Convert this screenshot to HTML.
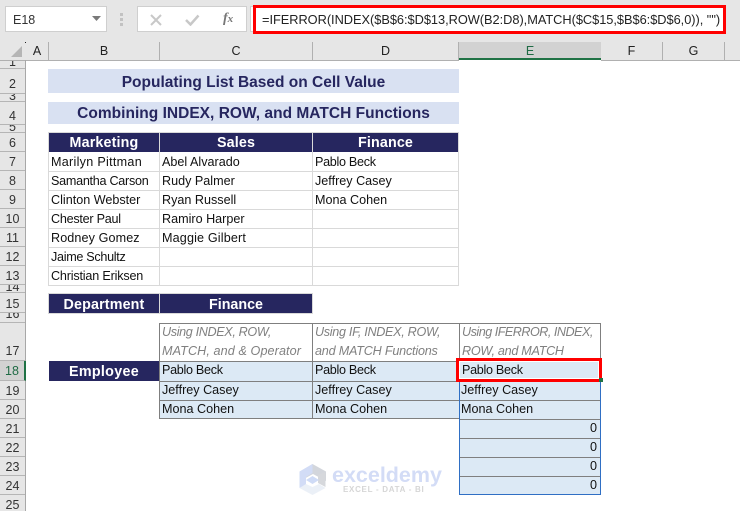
<!DOCTYPE html>
<html><head><meta charset="utf-8">
<style>
html,body{margin:0;padding:0;background:#fff}
#p{position:relative;width:740px;height:511px;overflow:hidden;background:#fff;font-family:"Liberation Sans",sans-serif;color:#111}
#p div{position:absolute;box-sizing:border-box}
.t{font-size:12.6px;white-space:nowrap;line-height:19px;height:19px}
.c{text-align:center;top:42px;height:18px;line-height:19px;font-size:12.5px;color:#222;border-right:1px solid #b0b0b0}
.r{left:0;width:25px;text-align:center;background:#e6e6e6;border-bottom:1px solid #b5b5b5;font-size:12.5px;color:#333;overflow:hidden}
.nv{background:#26265f;color:#fff;font-weight:bold;text-align:center;font-size:14.3px;white-space:nowrap;letter-spacing:.15px}
.ban{background:#d9e1f2;color:#26265f;font-weight:bold;text-align:center;white-space:nowrap;left:48px;width:411px;font-size:15.5px}
.g{background:#d9d9d9}
.k{background:#7f7f7f}
.b{background:#dce9f5}
.i{font-style:italic;color:#808080}
</style></head><body><div id="p">

<div style="left:0;top:0;width:740px;height:60px;background:#e6e6e6"></div>
<div style="left:5px;top:6px;width:102px;height:26px;background:#fff;border:1px solid #cfcfcf;font-size:12.500px;line-height:26px;padding-left:7px;color:#333">E18</div>
<svg style="position:absolute;left:92px;top:16px" width="10" height="6"><path d="M0 0H9L4.500 5Z" fill="#7a7a7a"/></svg>
<svg style="position:absolute;left:120px;top:13px" width="4" height="13"><path d="M0 0h3v3H0zM0 5h3v3H0zM0 10h3v3H0z" fill="#c2c2c2"/></svg>
<div style="left:137px;top:6px;width:110px;height:26px;background:#fff;border:1px solid #cfcfcf"></div>
<svg style="position:absolute;left:150px;top:14px" width="12" height="12"><path d="M1 1L11 11M11 1L1 11" stroke="#c8c8c8" stroke-width="2"/></svg>
<svg style="position:absolute;left:185px;top:14px" width="15" height="12"><path d="M1 6L5.500 10.500L13.500 1.500" stroke="#c8c8c8" stroke-width="2.500" fill="none"/></svg>
<div style="left:223px;top:10px;font:italic bold 14px 'Liberation Serif',serif;color:#777;line-height:18px">f<span style="font-size:11px">x</span></div>
<div style="left:250px;top:6px;width:8px;height:26px;background:#fff;border:1px solid #cfcfcf"></div>
<div style="left:253px;top:5px;width:473px;height:29px;background:#fff;border:3px solid #f00;font-size:12.8px;line-height:24px;padding-left:6px;white-space:nowrap;color:#222;overflow:hidden;letter-spacing:-.03px">=IFERROR(INDEX($B$6:$D$13,ROW(B2:D8),MATCH($C$15,$B$6:$D$6,0)), "")</div>

<svg style="position:absolute;left:10px;top:45px" width="14" height="13"><path d="M12 1V12H1Z" fill="#b5b5b5"/></svg>
<div style="left:25px;top:42px;width:1px;height:1px;background:#222"></div>
<div class="c" style="left:26px;width:23px">A</div>
<div class="c" style="left:49px;width:111px">B</div>
<div class="c" style="left:160px;width:153px">C</div>
<div class="c" style="left:313px;width:146px">D</div>
<div class="c" style="left:459px;width:142px;background:#d2d2d2;color:#1f6b45;border-right:0;border-bottom:2px solid #1f7245;line-height:19px">E</div>
<div class="c" style="left:601px;width:62px">F</div>
<div class="c" style="left:663px;width:62px">G</div>
<div style="left:0;top:60px;width:459px;height:1px;background:#b0b0b0"></div>
<div style="left:601px;top:60px;width:139px;height:1px;background:#b0b0b0"></div>

<div style="left:25px;top:60px;width:1px;height:451px;background:#a8a8a8"></div>
<div class="r" style="top:61px;height:8px;line-height:3px">1</div>
<div class="r" style="top:69px;height:25px;line-height:31px">2</div>
<div class="r" style="top:94px;height:8px;line-height:5px">3</div>
<div class="r" style="top:102px;height:23px;line-height:29px">4</div>
<div class="r" style="top:125px;height:8px;line-height:5px">5</div>
<div class="r" style="top:133px;height:19px;line-height:20px">6</div>
<div class="r" style="top:152px;height:19px;line-height:20px">7</div>
<div class="r" style="top:171px;height:19px;line-height:20px">8</div>
<div class="r" style="top:190px;height:19px;line-height:20px">9</div>
<div class="r" style="top:209px;height:19px;line-height:20px">10</div>
<div class="r" style="top:228px;height:19px;line-height:20px">11</div>
<div class="r" style="top:247px;height:19px;line-height:20px">12</div>
<div class="r" style="top:266px;height:19px;line-height:20px">13</div>
<div class="r" style="top:285px;height:8px;line-height:5px">14</div>
<div class="r" style="top:293px;height:20px;line-height:22px">15</div>
<div class="r" style="top:313px;height:10px;line-height:3px">16</div>
<div class="r" style="top:323px;height:38px;line-height:57px">17</div>
<div class="r" style="top:361px;height:20px;line-height:21px;width:26px;background:#d2d2d2;color:#1f6b45;border-right:2px solid #1f7245">18</div>
<div class="r" style="top:381px;height:19px;line-height:20px">19</div>
<div class="r" style="top:400px;height:19px;line-height:20px">20</div>
<div class="r" style="top:419px;height:19px;line-height:20px">21</div>
<div class="r" style="top:438px;height:19px;line-height:20px">22</div>
<div class="r" style="top:457px;height:19px;line-height:20px">23</div>
<div class="r" style="top:476px;height:19px;line-height:20px">24</div>
<div class="r" style="top:495px;height:16px;line-height:20px;border-bottom:0">25</div>

<div class="ban" style="top:69px;height:24px;line-height:27px">Populating List Based on Cell Value</div>
<div class="ban" style="top:102px;height:22px;line-height:24px;letter-spacing:.02px">Combining INDEX, ROW, and MATCH Functions</div>

<div class="g" style="left:48px;top:132px;width:411px;height:154px"></div>
<div style="left:49px;top:133px;width:409px;height:152px;background:#fff"></div>
<div class="nv" style="left:49px;top:133px;width:110px;height:19px;line-height:21px">Marketing</div>
<div class="nv" style="left:160px;top:133px;width:152px;height:19px;line-height:21px">Sales</div>
<div class="nv" style="left:313px;top:133px;width:145px;height:19px;line-height:21px">Finance</div>
<div class="g" style="left:159px;top:133px;width:1px;height:152px"></div>
<div class="g" style="left:312px;top:133px;width:1px;height:152px"></div>
<div class="g" style="left:49px;top:171px;width:409px;height:1px"></div>
<div class="g" style="left:49px;top:190px;width:409px;height:1px"></div>
<div class="g" style="left:49px;top:209px;width:409px;height:1px"></div>
<div class="g" style="left:49px;top:228px;width:409px;height:1px"></div>
<div class="g" style="left:49px;top:247px;width:409px;height:1px"></div>
<div class="g" style="left:49px;top:266px;width:409px;height:1px"></div>
<div class="t" style="left:51px;top:153px;letter-spacing:.28px">Marilyn Pittman</div>
<div class="t" style="left:51px;top:172px;letter-spacing:-.27px">Samantha Carson</div>
<div class="t" style="left:51px;top:191px">Clinton Webster</div>
<div class="t" style="left:51px;top:210px;letter-spacing:-.25px">Chester Paul</div>
<div class="t" style="left:51px;top:229px;letter-spacing:.1px">Rodney Gomez</div>
<div class="t" style="left:51px;top:248px;letter-spacing:-.3px">Jaime Schultz</div>
<div class="t" style="left:51px;top:267px;letter-spacing:-.18px">Christian Eriksen</div>
<div class="t" style="left:162px;top:153px">Abel Alvarado</div>
<div class="t" style="left:162px;top:172px">Rudy Palmer</div>
<div class="t" style="left:162px;top:191px">Ryan Russell</div>
<div class="t" style="left:162px;top:210px">Ramiro Harper</div>
<div class="t" style="left:162px;top:229px;letter-spacing:.15px">Maggie Gilbert</div>
<div class="t" style="left:315px;top:153px;letter-spacing:-.3px">Pablo Beck</div>
<div class="t" style="left:315px;top:172px">Jeffrey Casey</div>
<div class="t" style="left:315px;top:191px">Mona Cohen</div>

<div class="g" style="left:48px;top:293px;width:265px;height:21px"></div>
<div class="nv" style="left:49px;top:294px;width:110px;height:19px;line-height:22px">Department</div>
<div class="nv" style="left:160px;top:294px;width:152px;height:19px;line-height:22px;letter-spacing:0">Finance</div>

<div class="nv" style="left:49px;top:361px;width:110px;height:20px;line-height:23px;letter-spacing:.3px">Employee</div>

<div class="k" style="left:159px;top:323px;width:442px;height:96px"></div>
<div style="left:160px;top:324px;width:152px;height:37px;background:#fff"></div>
<div style="left:313px;top:324px;width:146px;height:37px;background:#fff"></div>
<div style="left:460px;top:324px;width:140px;height:37px;background:#fff"></div>
<div class="b" style="left:160px;top:362px;width:152px;height:19px"></div>
<div class="b" style="left:313px;top:362px;width:146px;height:19px"></div>
<div class="b" style="left:160px;top:382px;width:152px;height:18px"></div>
<div class="b" style="left:313px;top:382px;width:146px;height:18px"></div>
<div class="b" style="left:160px;top:401px;width:152px;height:17px"></div>
<div class="b" style="left:313px;top:401px;width:146px;height:17px"></div>

<div class="b" style="left:459px;top:361px;width:142px;height:134px;border:1px solid #2f6fc4"></div>
<div class="k" style="left:460px;top:400px;width:140px;height:1px"></div>
<div class="k" style="left:460px;top:419px;width:140px;height:1px"></div>
<div class="k" style="left:460px;top:438px;width:140px;height:1px"></div>
<div class="k" style="left:460px;top:457px;width:140px;height:1px"></div>
<div class="k" style="left:460px;top:476px;width:140px;height:1px"></div>

<div class="t i" style="left:162px;top:323px;letter-spacing:-.35px">Using INDEX, ROW,</div>
<div class="t i" style="left:162px;top:342px;letter-spacing:.1px">MATCH, and &amp; Operator</div>
<div class="t i" style="left:315px;top:323px;letter-spacing:-.3px">Using IF, INDEX, ROW,</div>
<div class="t i" style="left:315px;top:342px;letter-spacing:-.2px">and MATCH Functions</div>
<div class="t i" style="left:462px;top:323px;letter-spacing:-.5px">Using IFERROR, INDEX,</div>
<div class="t i" style="left:462px;top:342px;letter-spacing:-.28px">ROW, and MATCH</div>
<div class="t" style="left:162px;top:361px;letter-spacing:-.3px">Pablo Beck</div>
<div class="t" style="left:162px;top:381px">Jeffrey Casey</div>
<div class="t" style="left:162px;top:400px">Mona Cohen</div>
<div class="t" style="left:315px;top:361px;letter-spacing:-.3px">Pablo Beck</div>
<div class="t" style="left:315px;top:381px">Jeffrey Casey</div>
<div class="t" style="left:315px;top:400px">Mona Cohen</div>
<div class="t" style="left:461px;top:381px">Jeffrey Casey</div>
<div class="t" style="left:461px;top:400px">Mona Cohen</div>
<div class="t" style="left:590px;top:419px">0</div>
<div class="t" style="left:590px;top:438px">0</div>
<div class="t" style="left:590px;top:457px">0</div>
<div class="t" style="left:590px;top:476px">0</div>

<div style="left:456px;top:358px;width:146px;height:24px;border:3px solid #f00;box-shadow:inset 0 0 0 1px #fff"></div>
<div class="t" style="left:462px;top:361px;letter-spacing:-.3px">Pablo Beck</div>
<div style="left:599px;top:378px;width:4px;height:4px;background:#1f7245"></div>

<svg style="position:absolute;left:298px;top:463px" width="30" height="33" viewBox="0 0 30 33">
<path d="M14.500 1L28 8.500V18L15 11L2 18V8.500Z" fill="#d3d6dc"/>
<path d="M1.500 8.500L14.500 1V10L8 14V22L1.500 25Z" fill="#d2dcf6"/>
<path d="M20 12L27.500 8.500V24L20 20Z" fill="#d6d8dc"/>
<path d="M8 17L14.500 13L21 17L14.500 21Z" fill="#cfdbf6"/>
<path d="M1.500 25L8 21L14.500 24L21 21L27.500 25L14.500 32Z" fill="#ebf0f7"/>
</svg>
<div style="left:332px;top:462px;font:bold 21.500px 'Liberation Sans',sans-serif;color:#d3dcf6;line-height:26px;white-space:nowrap">exceldemy</div>
<div style="left:343px;top:485px;font:bold 8px 'Liberation Sans',sans-serif;color:#d6d6d6;line-height:9px;white-space:nowrap;letter-spacing:.7px">EXCEL - DATA - BI</div>

</div></body></html>
